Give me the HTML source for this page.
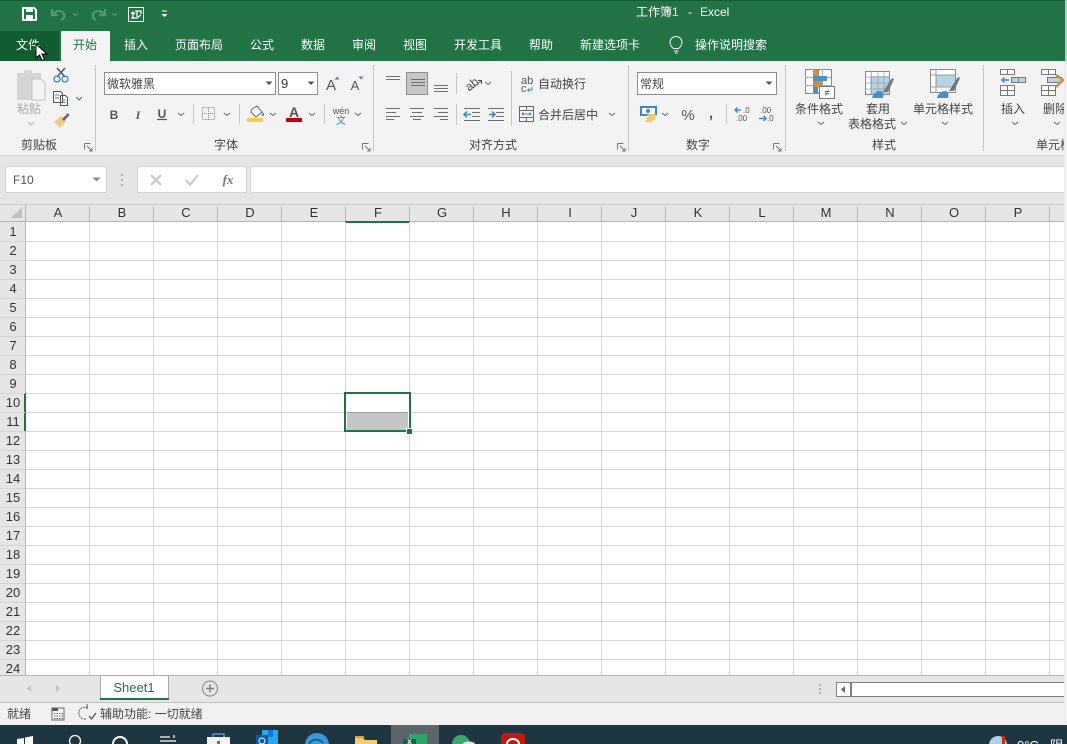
<!DOCTYPE html>
<html><head><meta charset="utf-8"><title>工作簿1 - Excel</title>
<style>
html,body{margin:0;padding:0;background:#fff;width:1067px;height:744px;overflow:hidden}
svg{display:block;position:absolute;left:0;top:0}
text{font-family:"Liberation Sans","Noto Sans CJK SC",sans-serif;font-size:12px;fill:#444}
.m{text-anchor:middle}
.w{fill:#fff}
.h{font-size:13px;fill:#333;text-anchor:middle}
.ch{fill:none;stroke:#666;stroke-width:1}
</style></head><body>
<svg width="1067" height="744" viewBox="0 0 1067 744">
<!-- title + tabs -->
<rect x="0" y="0" width="1067" height="61" fill="#217346"/>
<rect x="0" y="0" width="1067" height="1" fill="#125c33"/>
<rect x="0" y="31" width="59" height="30" fill="#115c30"/>
<rect x="61" y="31" width="49" height="30" fill="#f3f3f3"/>
<!-- QAT -->
<path d="M23 8h11l2 2v10H23z" fill="none" stroke="#fff" stroke-width="2"/><rect x="26" y="8" width="7" height="4" fill="#fff"/><rect x="26" y="15" width="7" height="5" fill="#fff"/>
<path d="M52 9v6h6M52.500 14.500C56 10 62 10 64 14c1 3-1 5-3 6" fill="none" stroke="#4e9a73" stroke-width="2.200"/>
<path d="M73 13l2.500 2.500L78 13" fill="none" stroke="#4e9a73"/>
<path d="M105 9v6h-6M104.500 14.500C101 10 95 10 93 14c-1 3 1 5 3 6" fill="none" stroke="#4e9a73" stroke-width="2.200"/>
<path d="M112 13l2.500 2.500L117 13" fill="none" stroke="#4e9a73"/>
<rect x="128.500" y="7.500" width="15" height="14" fill="none" stroke="#fff"/>
<path d="M131 18h5M133 12v6M135 11h6v3M137 11v7l4-3M131 14l2-2 2 2" fill="none" stroke="#fff" stroke-width="1.300"/>
<path d="M162 11h5" stroke="#fff"/><path d="M161.500 14h6l-3 3z" fill="#fff"/>
<text x="636" y="16" class="w">工作簿1</text><text x="688" y="16" class="w">-</text><text x="700" y="16" class="w">Excel</text>
<text x="16" y="49" class="w">文件</text>
<text x="73" y="49" style="fill:#217346">开始</text>
<text x="124" y="49" class="w">插入</text>
<text x="175" y="49" class="w">页面布局</text>
<text x="250" y="49" class="w">公式</text>
<text x="301" y="49" class="w">数据</text>
<text x="352" y="49" class="w">审阅</text>
<text x="403" y="49" class="w">视图</text>
<text x="454" y="49" class="w">开发工具</text>
<text x="529" y="49" class="w">帮助</text>
<text x="580" y="49" class="w">新建选项卡</text>
<path d="M673.500 48.500c-2.500-2-3.500-3.500-3.500-6a6 6 0 0 1 12 0c0 2.500-1 4-3.500 6zM674 51h4.500M675 53h2.500" fill="none" stroke="#fff"/>
<text x="695" y="49" class="w">操作说明搜索</text>

<!-- ribbon -->
<rect x="0" y="61" width="1067" height="94" fill="#f3f3f3"/>
<rect x="0" y="155" width="1067" height="49" fill="#e6e6e6"/>
<rect x="0" y="155" width="1067" height="1" fill="#d2d2d2"/>
<path d="M95.500 65v86M373.500 65v86M628.500 65v86M785.500 65v86M983.500 65v86" stroke="#c6c6c6"/>
<path d="M193.500 104v20M239.500 104v20M324.500 104v20M456.500 73v21M456.500 104v21M511.500 71v55M726.500 104v20" stroke="#c6c6c6"/>
<!-- clipboard -->
<path d="M17 73h7v-3h8v3h9v9H32v18H17z" fill="#d6d4d6"/>
<path d="M32 79h9l4 4v17H32z" fill="#f3f3f3" stroke="#c2c2c2"/>
<text x="29" y="113" class="m" style="fill:#a9a9a9;font-size:12px">粘贴</text>
<path d="M28 122l3 3 3-3" fill="none" stroke="#b5b5b5"/>
<path d="M57 68l8 9M65 68l-8 9" stroke="#555" stroke-width="1.500"/><circle cx="57" cy="79" r="3" fill="none" stroke="#3f87b8" stroke-width="1.300"/><circle cx="65" cy="79" r="3" fill="none" stroke="#3f87b8" stroke-width="1.300"/>
<path d="M53.500 91.500h7l2 2v9h-9zM60.500 95.500h5l2 2v8h-7z" fill="#f9f9f9" stroke="#555"/>
<path d="M55 95h4M55 98h4M62.500 100h3M62.500 102.500h3" stroke="#3f87b8"/>
<path d="M76 97l3 3 3-3" class="ch" stroke-width="1.300"/>
<path d="M54 122l7-6 5 5-6 7z" fill="#eecb8c"/><path d="M62 119l6-6 1.500 2-5.500 6z" fill="#666"/>
<text x="39" y="149" class="m">剪贴板</text>
<path d="M84.500 143.500h6M84.500 143.500v6M87 146l5 5M92 148v3h-3" fill="none" stroke="#777"/>
<!-- font -->
<rect x="104.500" y="72.500" width="171" height="22" fill="#fff" stroke="#8e8e8e"/>
<rect x="278.500" y="72.500" width="39" height="22" fill="#fff" stroke="#8e8e8e"/>
<text x="107" y="88">微软雅黑</text>
<path d="M265.500 81.500h7l-3.500 3.500zM307.500 81.500h7l-3.500 3.500z" fill="#555"/>
<text x="281" y="88" style="font-size:13px;fill:#333">9</text>
<text x="331" y="90" class="m" style="font-size:15px;fill:#555">A</text><path d="M334.500 79.500l2.500-3 2.500 3z" fill="#3f87b8"/>
<text x="355" y="90" class="m" style="font-size:13px;fill:#555">A</text><path d="M358.500 76.500h5l-2.500 3z" fill="#3f87b8"/>
<text x="114" y="119" class="m" style="font-weight:bold;fill:#555">B</text>
<text x="138" y="119" class="m" style="font-style:italic;font-weight:bold;font-family:'Liberation Serif',serif;fill:#555">I</text>
<text x="162" y="118" class="m" style="font-weight:bold;fill:#555">U</text><path d="M157 119.500h10" stroke="#555" stroke-width="1.200"/>
<path d="M178 113l3 2.500 3-2.500M224 113l3 2.500 3-2.500M270 113l3 2.500 3-2.500M309 113l3 2.500 3-2.500M355 113l3 2.500 3-2.500" class="ch"/>
<rect x="202.500" y="107.500" width="12" height="12" fill="none" stroke="#888" stroke-dasharray="1 1"/><path d="M208.500 107v13M202 113.500h13" stroke="#888" stroke-dasharray="1 1"/>
<path d="M252 109l5-3 5 6-6 5-5-5z" fill="#f7f7f7" stroke="#666"/><path d="M263 112c1 2 1.500 3 0 4.500-1.500-1.500-1-3 0-4.500z" fill="#3f87b8"/>
<rect x="247" y="118" width="16" height="4" fill="#f6ce4a"/>
<text x="294" y="117" class="m" style="font-size:14px;fill:#555;font-weight:bold">A</text>
<rect x="286" y="118" width="16" height="4" fill="#c00000"/>
<text x="341" y="114" class="m" style="font-size:9px;fill:#555">wén</text>
<text x="341" y="124" class="m" style="font-size:10px;fill:#3f87b8">文</text>
<text x="226" y="149" class="m">字体</text>
<path d="M362.500 143.500h6M362.500 143.500v6M365 146l5 5M370 148v3h-3" fill="none" stroke="#777"/>
<!-- align -->
<rect x="406.500" y="72.500" width="21" height="22" fill="#c6c6c6" stroke="#8e8e8e"/>
<path d="M386 76.500h14M386 79.500h14M411 79.500h14M411 82.500h14M411 85.500h14M434 85.500h14M434 88.500h14M434 91.500h14" stroke="#6e6e6e"/>
<path d="M386 108.500h14M386 112.500h10M386 116.500h14M386 119.500h8M410 108.500h14M412 112.500h10M410 116.500h14M413 119.500h8M434 108.500h14M438 112.500h10M434 116.500h14M440 119.500h8" stroke="#6e6e6e"/>
<text x="465" y="88" transform="rotate(-40 472 84)" style="font-size:12px;fill:#555">ab</text><path d="M469 91l12-10M478 80.500h3.500v3.500" fill="none" stroke="#555"/>
<path d="M485 82l3 2.500 3-2.500M609 113l3 2.500 3-2.500" class="ch"/>
<path d="M464 108.500h16M472 112.500h8M472 116.500h8M464 120.500h16M488 108.500h16M496 112.500h8M496 116.500h8M488 120.500h16" stroke="#6e6e6e"/>
<path d="M471 114.500h-7M467 111.500l-3 3 3 3M489 114.500h6M492 111.500l3 3-3 3" fill="none" stroke="#3f87b8" stroke-width="1.500"/>
<text x="521" y="84" style="font-size:11px;fill:#555">ab</text><text x="521" y="92" style="font-size:11px;fill:#555">c</text><path d="M532 87v3h-4M529.500 88.500l-2 1.500 2 1.500" fill="none" stroke="#3f87b8"/>
<text x="538" y="88">自动换行</text>
<rect x="519.500" y="106.500" width="14" height="15" fill="#f8f8f8" stroke="#666"/><path d="M520 110.500h13M520 117.500h13M526.500 106v4M526.500 118v3" stroke="#666"/><path d="M522 114h9M523.500 112.500l-1.500 1.500 1.500 1.500M529.500 112.500l1.500 1.500-1.500 1.500" fill="none" stroke="#3f87b8"/>
<text x="538" y="119">合并后居中</text>
<text x="493" y="149" class="m">对齐方式</text>
<path d="M617.500 143.500h6M617.500 143.500v6M620 146l5 5M625 148v3h-3" fill="none" stroke="#777"/>
<!-- number -->
<rect x="637.500" y="72.500" width="139" height="22" fill="#fff" stroke="#8e8e8e"/>
<text x="640" y="88">常规</text>
<path d="M765.500 81.500h7l-3.500 3.500z" fill="#555"/>
<rect x="641" y="107" width="15" height="8" fill="#fff" stroke="#3f87b8" stroke-width="2"/>
<circle cx="648" cy="111" r="2" fill="#3f87b8"/>
<ellipse cx="652" cy="115.500" rx="5" ry="1.600" fill="#eecb6e"/><ellipse cx="651" cy="118.500" rx="5" ry="1.600" fill="#eecb6e"/><ellipse cx="649" cy="121" rx="4" ry="1.300" fill="#eecb6e"/>
<path d="M662 113l3 2.500 3-2.500" class="ch"/>
<text x="688" y="120" class="m" style="font-size:15px;fill:#555">%</text>
<text x="711" y="118" class="m" style="font-size:15px;font-weight:bold;fill:#555">,</text>
<path d="M741 110h-6M737.500 107.500l-2.500 2.500 2.500 2.500M759 118.500h7M763.500 116l2.500 2.500-2.500 2.500" fill="none" stroke="#3f87b8" stroke-width="1.400"/>
<text x="743" y="113" style="font-size:8px;fill:#555">.0</text><text x="736" y="121" style="font-size:8px;fill:#555">.00</text>
<text x="760" y="113" style="font-size:8px;fill:#555">.00</text><text x="767" y="121" style="font-size:8px;fill:#555">.0</text>
<text x="698" y="149" class="m">数字</text>
<path d="M773.500 143.500h6M773.500 143.500v6M776 146l5 5M781 148v3h-3" fill="none" stroke="#777"/>
<!-- styles -->
<rect x="805.500" y="69.500" width="26" height="24" fill="#fff" stroke="#888"/>
<path d="M805 77.500h26M805 85.500h26M813.500 69v25M822.500 69v25" stroke="#aaa"/>
<rect x="813" y="70" width="6" height="7" fill="#d18a47"/><rect x="813" y="76" width="14" height="5" fill="#4a90bf"/><rect x="813" y="81" width="9" height="6" fill="#d18a47"/><rect x="813" y="87" width="5" height="6" fill="#4a90bf"/>
<rect x="819.500" y="86.500" width="15" height="12" fill="#fff" stroke="#777"/>
<text x="827" y="96" class="m" style="font-size:10px;fill:#444">≠</text>
<text x="819" y="113" class="m">条件格式</text>
<path d="M818 122l3 2.500 3-2.500" class="ch"/>
<rect x="865.500" y="71.500" width="24" height="23" fill="#fff" stroke="#888"/>
<rect x="870" y="76" width="19" height="18" fill="#b8d3e4"/>
<path d="M865 77h25M865 83h25M865 89h25M871.500 71v24M878 71v24M884 71v24" stroke="#999" stroke-opacity=".7"/>
<path d="M883 92l9-14 2 1-6 13z" fill="#777"/><path d="M872 98c1-4 4-7 8-7 3 0 4 3 3 7z" fill="#4a90bf"/>
<text x="878" y="113" class="m">套用</text>
<text x="848" y="128">表格格式</text>
<path d="M901 122l3 2.500 3-2.500" class="ch"/>
<rect x="930.500" y="69.500" width="25" height="23" fill="#fff" stroke="#888"/>
<rect x="936" y="75" width="19" height="12" fill="#b8d3e4"/>
<path d="M930 75h26M930 87h26M936 69v24" stroke="#999"/>
<path d="M949 91l9-14 2 1-6 13z" fill="#777"/><path d="M937 98c1-4 4-7 8-7 3 0 4 3 3 7z" fill="#4a90bf"/>
<text x="943" y="113" class="m">单元格样式</text>
<path d="M942 122l3 2.500 3-2.500" class="ch"/>
<text x="884" y="149" class="m">样式</text>
<!-- cells -->
<rect x="1000.500" y="69.500" width="14" height="5" fill="#fff" stroke="#777"/><path d="M1007.500 69v5" stroke="#777"/>
<rect x="1011.500" y="77.500" width="14" height="5" fill="#b8d3e4" stroke="#777"/><path d="M1018.500 77v5" stroke="#777"/>
<rect x="1000.500" y="85.500" width="14" height="10" fill="#fff" stroke="#777"/><path d="M1000 90.500h15M1007.500 85v10" stroke="#777"/>
<path d="M1009 80h-7M1004.500 77.500l-2.500 2.500 2.500 2.500" fill="none" stroke="#3f87b8" stroke-width="1.500"/>
<text x="1013" y="113" class="m">插入</text>
<path d="M1012 122l3 2.500 3-2.500M1054 122l3 2.500 3-2.500" class="ch"/>
<rect x="1041.500" y="69.500" width="14" height="5" fill="#fff" stroke="#777"/><path d="M1048.500 69v5" stroke="#777"/>
<rect x="1047.500" y="77.500" width="14" height="5" fill="#b8d3e4" stroke="#777"/>
<rect x="1041.500" y="85.500" width="14" height="10" fill="#fff" stroke="#777"/><path d="M1041 90.500h15M1048.500 85v10" stroke="#777"/>
<path d="M1056 75l7 5-7 7" fill="none" stroke="#d18a47" stroke-width="2.500"/>
<text x="1043" y="113">删除</text>
<text x="1036" y="149">单元格</text>

<!-- formula bar -->
<rect x="5.500" y="166.500" width="101" height="26" fill="#fff" stroke="#d4d4d4"/>
<text x="13" y="184" style="fill:#555">F10</text>
<path d="M92.500 177.500h8l-4 4z" fill="#8a8a8a"/>
<path d="M122 174v2M122 179v2M122 184v2" stroke="#b0b0b0" stroke-width="2"/>
<rect x="137.500" y="166.500" width="109" height="26" fill="#fff" stroke="#d4d4d4"/>
<path d="M151 175l10 10M161 175l-10 10M186 180l4 5 8-10" fill="none" stroke="#c8c8c8" stroke-width="2"/>
<text x="228" y="184" class="m" style="font-family:'Liberation Serif',serif;font-style:italic;font-weight:bold;font-size:13px;fill:#777">fx</text>
<rect x="250.500" y="166.500" width="820" height="26" fill="#fff" stroke="#d4d4d4"/>

<!-- sheet -->
<rect x="26" y="222" width="1041" height="453" fill="#fff"/>
<rect x="0" y="204" width="1067" height="18" fill="#e6e6e6"/>
<rect x="0" y="222" width="25" height="453" fill="#e6e6e6"/>
<rect x="0" y="204" width="1067" height="1" fill="#cfcfcf"/>
<rect x="0" y="221" width="1067" height="1" fill="#b5b5b5"/>
<rect x="25" y="204" width="1" height="471" fill="#b5b5b5"/>
<rect x="345" y="221" width="65" height="2" fill="#217346"/>
<rect x="24" y="393" width="2" height="38" fill="#217346"/>
<path d="M11 218h11V207z" fill="#c0c0c0"/>
<path d="M89.500 222V675M153.500 222V675M217.500 222V675M281.500 222V675M345.500 222V675M409.500 222V675M473.500 222V675M537.500 222V675M601.500 222V675M665.500 222V675M729.500 222V675M793.500 222V675M857.500 222V675M921.500 222V675M985.500 222V675M1049.500 222V675" stroke="#d6d6d6"/>
<path d="M26 241.500H1067M26 260.500H1067M26 279.500H1067M26 298.500H1067M26 317.500H1067M26 336.500H1067M26 355.500H1067M26 374.500H1067M26 393.500H1067M26 412.500H1067M26 431.500H1067M26 450.500H1067M26 469.500H1067M26 488.500H1067M26 507.500H1067M26 526.500H1067M26 545.500H1067M26 564.500H1067M26 583.500H1067M26 602.500H1067M26 621.500H1067M26 640.500H1067M26 659.500H1067" stroke="#d6d6d6"/>
<path d="M0 241.500H25M0 260.500H25M0 279.500H25M0 298.500H25M0 317.500H25M0 336.500H25M0 355.500H25M0 374.500H25M0 393.500H25M0 412.500H25M0 431.500H25M0 450.500H25M0 469.500H25M0 488.500H25M0 507.500H25M0 526.500H25M0 545.500H25M0 564.500H25M0 583.500H25M0 602.500H25M0 621.500H25M0 640.500H25M0 659.500H25" stroke="#d4d4d4"/>
<path d="M89.500 207V221M153.500 207V221M217.500 207V221M281.500 207V221M345.500 207V221M409.500 207V221M473.500 207V221M537.500 207V221M601.500 207V221M665.500 207V221M729.500 207V221M793.500 207V221M857.500 207V221M921.500 207V221M985.500 207V221M1049.500 207V221" stroke="#b5b5b5"/>
<text x="58" y="217" class="h">A</text><text x="122" y="217" class="h">B</text><text x="186" y="217" class="h">C</text><text x="250" y="217" class="h">D</text><text x="314" y="217" class="h">E</text><text x="378" y="217" class="h">F</text><text x="442" y="217" class="h">G</text><text x="506" y="217" class="h">H</text><text x="570" y="217" class="h">I</text><text x="634" y="217" class="h">J</text><text x="698" y="217" class="h">K</text><text x="762" y="217" class="h">L</text><text x="826" y="217" class="h">M</text><text x="890" y="217" class="h">N</text><text x="954" y="217" class="h">O</text><text x="1018" y="217" class="h">P</text>
<text x="13" y="236" class="h">1</text><text x="13" y="255" class="h">2</text><text x="13" y="274" class="h">3</text><text x="13" y="293" class="h">4</text><text x="13" y="312" class="h">5</text><text x="13" y="331" class="h">6</text><text x="13" y="350" class="h">7</text><text x="13" y="369" class="h">8</text><text x="13" y="388" class="h">9</text><text x="13" y="407" class="h">10</text><text x="13" y="426" class="h">11</text><text x="13" y="445" class="h">12</text><text x="13" y="464" class="h">13</text><text x="13" y="483" class="h">14</text><text x="13" y="502" class="h">15</text><text x="13" y="521" class="h">16</text><text x="13" y="540" class="h">17</text><text x="13" y="559" class="h">18</text><text x="13" y="578" class="h">19</text><text x="13" y="597" class="h">20</text><text x="13" y="616" class="h">21</text><text x="13" y="635" class="h">22</text><text x="13" y="654" class="h">23</text><text x="13" y="673" class="h">24</text>
<!-- selection -->
<rect x="345" y="393" width="65" height="39" fill="#fff"/>
<rect x="347" y="412" width="61" height="18" fill="#c6c6c6"/>
<rect x="347" y="412" width="61" height="1" fill="#a0a0a0"/>
<rect x="345" y="393" width="65" height="38" fill="none" stroke="#217346" stroke-width="2"/>
<rect x="406" y="428" width="7" height="7" fill="#fff"/>
<rect x="407" y="429" width="5" height="5" fill="#217346"/>

<!-- sheet tabs -->
<rect x="0" y="675" width="1067" height="28" fill="#e6e6e6"/>
<rect x="0" y="675" width="1067" height="1" fill="#b5b5b5"/>
<rect x="0" y="702" width="1067" height="1" fill="#c0c0c0"/>
<path d="M100.500 699V675.500H168.500V699" fill="#fff" stroke="#a8a8a8"/>
<rect x="100" y="675" width="69" height="1" fill="#fff" fill-opacity="0"/>
<rect x="100" y="698" width="69" height="2" fill="#217346"/>
<text x="134" y="692" class="m" style="font-size:13px;fill:#217346">Sheet1</text>
<path d="M31 685l-4 3.500 4 3.500zM56 685l4 3.500-4 3.500z" fill="#c2c2c2"/>
<circle cx="210" cy="688.500" r="7.500" fill="#e6e6e6" stroke="#808080" stroke-width="1"/>
<path d="M206 688.500h8M210 684.500v8" stroke="#808080" stroke-width="1.500"/>
<path d="M820 684v2M820 688v2M820 692v2" stroke="#b0b0b0" stroke-width="2"/>
<rect x="836.500" y="682.500" width="240" height="14" fill="#fff" stroke="#808080"/>
<rect x="850" y="682" width="2" height="15" fill="#808080"/>
<path d="M845 686l-4 3.500 4 3.500z" fill="#666"/>

<!-- status -->
<rect x="0" y="703" width="1067" height="22" fill="#f1f1f1"/>
<text x="7" y="718">就绪</text>
<path d="M52 708h12v12H52z" fill="#f8f8f8" stroke="#666"/><rect x="52" y="708" width="6" height="3" fill="#555"/><path d="M54 713.500h9M54 716h9M54 718.500h9" stroke="#666" stroke-dasharray="1.500 1"/>
<path d="M88 708a6 6 0 1 0-2 11" fill="none" stroke="#555" stroke-dasharray="2 1"/><path d="M89 716l2.500 3 4.500-6" fill="none" stroke="#555" stroke-width="1.300"/><path d="M87 704v5" stroke="#555"/>
<text x="100" y="718">辅助功能: 一切就绪</text>
<rect x="1064" y="61" width="3" height="664" fill="#e8e8e8"/>
<rect x="1065" y="0" width="2" height="744" fill="#f7f7f7" fill-opacity=".7"/>

<!-- taskbar -->
<rect x="0" y="725" width="1067" height="19" fill="#1f3540"/>
<path d="M17 739l7-1v6h-7zM25 737.500l8-1.500v8h-8z" fill="#fff"/>
<circle cx="75" cy="741" r="5.500" fill="none" stroke="#fff" stroke-width="1.300"/>
<circle cx="120" cy="744" r="7" fill="none" stroke="#fff" stroke-width="2"/>
<path d="M160 737h10M160 741h16M174 735v3" fill="none" stroke="#fff" stroke-width="1.300"/>
<rect x="207" y="737" width="23" height="8" fill="#f4f4f4"/><path d="M213 737v-3h11v3" fill="none" stroke="#3aa0d8" stroke-width="1.500"/><rect x="217" y="741" width="3" height="3" fill="#d84a2a"/>
<rect x="262" y="730" width="16" height="15" fill="#28a8ea"/><rect x="268" y="730" width="5" height="7" fill="#0f78d4"/><rect x="256" y="735" width="12" height="10" fill="#0a5aa8"/><circle cx="262" cy="741" r="3" fill="none" stroke="#fff"/>
<circle cx="317" cy="745" r="12" fill="#3b9ad6"/><path d="M309 744c2-5 11-6 14-1" fill="none" stroke="#1d5f99" stroke-width="2"/>
<path d="M355 738h8l2 2h12v5h-22z" fill="#f4cf6b"/><rect x="355" y="736" width="9" height="2" fill="#dca13b"/>
<rect x="391" y="725" width="48" height="19" fill="#5b666c"/>
<rect x="409" y="734" width="18" height="11" fill="#33a36c"/><rect x="403" y="739" width="13" height="6" fill="#0f6a3c"/>
<text x="409.500" y="744" class="m" style="font-size:8px;fill:#fff;font-weight:bold">x</text>
<circle cx="461" cy="744" r="9" fill="#3aa76d"/><ellipse cx="469" cy="744" rx="6" ry="2.500" fill="#e6e6e6"/>
<rect x="501" y="733" width="24" height="14" rx="4" fill="#be1a10"/><path d="M507 744a6 5 0 0 1 12 0" fill="none" stroke="#fff" stroke-width="2"/>
<circle cx="998" cy="745" r="9" fill="#a9d4e4"/><rect x="1002" y="736" width="3" height="8" fill="#c92a1f"/>
<text x="1017" y="750" class="w" style="font-size:13px">0°C</text>
<text x="1050" y="750" class="w" style="font-size:13px">阴</text>

<!-- cursor -->
<path d="M36 44v14l3.500-3 2.500 5.500 2.500-1-2.500-5.500h5z" fill="#fff" stroke="#000" stroke-width="1"/>
</svg>
</body></html>
